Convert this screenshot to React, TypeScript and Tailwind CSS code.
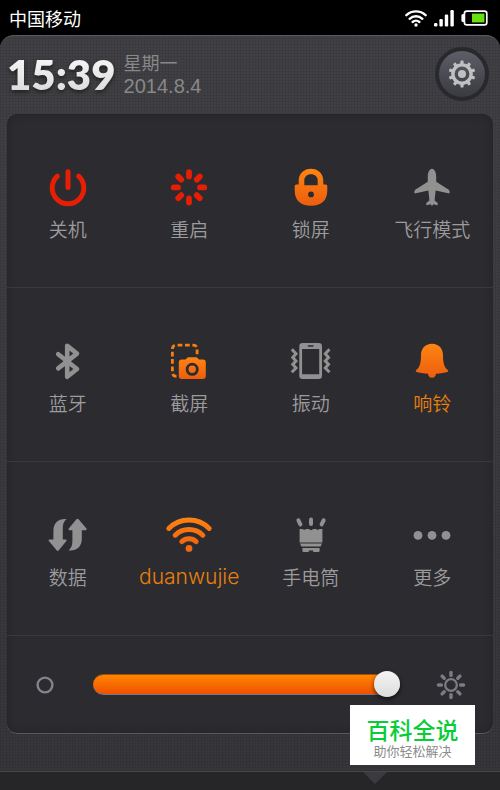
import { useState } from 'react';
import type { ReactNode } from 'react';

type Tone = 'off' | 'danger' | 'on';

interface Toggle {
  id: string;
  label: string;
  icon: ReactNode;
  tone: Tone;
  highlight?: boolean;
}

const toneClass: Record<Tone, string> = {
  off: 'text-[#919191]',
  danger: 'text-[#e61e04]',
  on: 'text-[#f77410]',
};

const Icon = ({ children }: { children: ReactNode }) => (
  <svg viewBox="0 0 48 48" className="h-12 w-12" fill="currentColor" aria-hidden="true">
    {children}
  </svg>
);

const PowerIcon = () => (
  <Icon>
    <g fill="none" stroke="currentColor" strokeWidth="5" strokeLinecap="round">
      <path d="M13.4 13.2A15.8 15.8 0 1 0 34.6 13.2" />
      <path d="M24 8.8V24.6" />
    </g>
  </Icon>
);

const RestartIcon = () => (
  <Icon>
    <g stroke="currentColor" strokeWidth="5.8" strokeLinecap="round">
      {[0, 45, 90, 135, 180, 225, 270, 315].map((angle) => (
        <path key={angle} d="M24 9.2V13.4" transform={`rotate(${angle} 24 24.4)`} />
      ))}
    </g>
  </Icon>
);

const LockIcon = () => (
  <Icon>
    <path
      fill="url(#orange)"
      fillRule="evenodd"
      d="M11.7 21.4V17.5C11.7 10.5 17 5.7 24 5.7S36.3 10.5 36.3 17.5V21.4H38.6Q40.3 21.4 40.3 23.2V27.5C40.3 37.5 34.5 42.7 24 42.7S7.7 37.5 7.7 27.5V23.2Q7.7 21.4 9.4 21.4ZM17.3 22.3H30.7V17.8C30.7 13.8 28 11.3 24 11.3S17.3 13.8 17.3 17.8ZM24 28.5A2.9 2.9 0 1 0 24 34.3A2.9 2.9 0 1 0 24 28.5Z"
    />
  </Icon>
);

const PlaneIcon = () => (
  <Icon>
    <path d="M24 5.7C26.6 5.7 28.2 9.6 28.2 13.2V18.8L40.4 26.6C41.6 27.5 42 29.2 41.4 30.6L27.6 27.6 26.6 37.6 29.2 39.6C29.9 40.3 29.9 41.6 29.5 42.2L25.4 41.2 24 42.9 22.6 41.2 18.5 42.2C18.1 41.6 18.1 40.3 18.8 39.6L21.4 37.6 20.4 27.6 6.6 30.6C6 29.2 6.4 27.5 7.6 26.6L19.8 18.8V13.2C19.8 9.6 21.4 5.7 24 5.7Z" />
  </Icon>
);

const BluetoothIcon = () => (
  <Icon>
    <path
      d="M14.2 17.2L33 32 23.2 39.8V8.8L33 16.6 14.2 31.4"
      fill="none"
      stroke="currentColor"
      strokeWidth="4.6"
      strokeLinecap="round"
      strokeLinejoin="round"
    />
  </Icon>
);

const ScreenshotIcon = () => (
  <Icon>
    <path
      d="M11.5 39.3C8.8 39.3 7.4 37.9 7.4 35.2V12.2C7.4 9.5 8.8 8.1 11.5 8.1H28C30.7 8.1 32.1 9.5 32.1 12.2V19.5"
      fill="none"
      stroke="#f77d10"
      strokeWidth="2.8"
      strokeDasharray="4.8 2.6"
    />
    <path
      fill="url(#orange)"
      fillRule="evenodd"
      d="M20.6 22.6 22 21C22.4 20.5 23 20.3 23.6 20.3H31C31.6 20.3 32.2 20.5 32.6 21L34 22.6H37.8Q40.8 22.6 40.8 25.6V39Q40.8 42 37.8 42H16.8Q13.8 42 13.8 39V25.6Q13.8 22.6 16.8 22.6ZM27.2 25.8A6.5 6.5 0 1 0 27.2 38.8A6.5 6.5 0 1 0 27.2 25.8ZM27.2 28.6A3.7 3.7 0 1 1 27.2 36A3.7 3.7 0 1 1 27.2 28.6Z"
    />
  </Icon>
);

const VibrateIcon = () => (
  <Icon>
    <path
      fillRule="evenodd"
      d="M15.6 6H31.7Q35 6 35 9.3V38.7Q35 42 31.7 42H15.6Q12.3 42 12.3 38.7V9.3Q12.3 6 15.6 6ZM15.1 12V37.2H32.2V12ZM21.4 8.2Q20.6 8.2 20.6 9T21.4 9.8H25.9Q26.7 9.8 26.7 9T25.9 8.2Z"
    />
    <g fill="none" stroke="currentColor" strokeWidth="3">
      <path d="M4.8 12.2 9 16.8 5.8 20.4 9 24 5.8 27.4 9 31 4.8 35.2" />
      <path d="M42.5 12.2 38.3 16.8 41.5 20.4 38.3 24 41.5 27.4 38.3 31 42.5 35.2" />
    </g>
  </Icon>
);

const BellIcon = () => (
  <Icon>
    <path
      fill="url(#orange)"
      d="M24 6.7C17 6.7 13 11.7 13 18 13 26 11.8 30.2 8.1 33.3 7.4 34.1 7.8 34.9 8.7 35.1 11.3 35.9 15.2 36.6 20 36.8 20.2 39.2 21.8 40.8 24 40.8S27.8 39.2 28 36.8C32.8 36.6 36.7 35.9 39.3 35.1 40.2 34.9 40.6 34.1 39.9 33.3 36.2 30.2 35 26 35 18 35 11.7 31 6.7 24 6.7Z"
    />
  </Icon>
);

const DataIcon = () => {
  const arrow =
    'M22.6 8.1C14.6 7.4 9.4 11.8 9.4 19.5V28.4H5.6C4.6 28.4 4.2 29.3 4.8 30.1L12.6 39.3C13.2 40.1 14.2 40.1 14.8 39.3L22.4 30.1C23 29.3 22.6 28.4 21.6 28.4H18.8V18.5C18.8 14 19.4 10.8 22.6 8.1Z';
  return (
    <Icon>
      <path d={arrow} />
      <path d={arrow} transform="rotate(180 23.6 23.8)" />
    </Icon>
  );
};

const WifiIcon = () => (
  <Icon>
    <g fill="none" stroke="url(#orangeTall)" strokeWidth="5" strokeLinecap="round">
      <path d="M3.8 17.4A28.4 28.4 0 0 1 44.2 17.4" />
      <path d="M10.2 24.2A19.8 19.8 0 0 1 37.8 24.2" />
      <path d="M16.8 30.6A10.6 10.6 0 0 1 31.2 30.6" />
    </g>
    <circle cx="24" cy="37.4" r="3.4" fill="#f26a10" />
  </Icon>
);

const TorchIcon = () => (
  <Icon>
    <g stroke="currentColor" strokeWidth="4" strokeLinecap="round">
      <path d="M24 8.4V13" />
      <path d="M11.4 9.4 13.4 13.4" />
      <path d="M36.6 9.4 34.6 13.4" />
    </g>
    <path d="M12.6 18H15.6L17.2 19 19 18H21.6L24 19.2 26.4 18H29L30.8 19 32.4 18H35.4V31.4H12.6ZM13 32.6H35L33.6 35.6H14.4ZM15.4 36.9H32.6V39.8Q32.6 41 31.4 41H26.2V39.4H21.8V41H16.6Q15.4 41 15.4 39.8Z" />
  </Icon>
);

const MoreIcon = () => (
  <Icon>
    <circle cx="10" cy="24.4" r="4.4" />
    <circle cx="24" cy="24.4" r="4.4" />
    <circle cx="38" cy="24.4" r="4.4" />
  </Icon>
);

const GearIcon = () => (
  <svg viewBox="0 0 28 28" className="h-7 w-7" fill="#c0c0c2" aria-hidden="true">
    <circle cx="14" cy="14" r="9.1" fill="none" stroke="#c0c0c2" strokeWidth="3.4" />
    <circle cx="14" cy="14" r="4" />
    {[0, 36, 72, 108, 144, 180, 216, 252, 288, 324].map((angle) => (
      <rect key={angle} x="12.4" y="0.6" width="3.2" height="4" rx="1" transform={`rotate(${angle} 14 14)`} />
    ))}
  </svg>
);

const toggles: Toggle[] = [
  { id: 'power', label: '关机', icon: <PowerIcon />, tone: 'danger' },
  { id: 'restart', label: '重启', icon: <RestartIcon />, tone: 'danger' },
  { id: 'lock', label: '锁屏', icon: <LockIcon />, tone: 'on' },
  { id: 'airplane', label: '飞行模式', icon: <PlaneIcon />, tone: 'off' },
  { id: 'bluetooth', label: '蓝牙', icon: <BluetoothIcon />, tone: 'off' },
  { id: 'screenshot', label: '截屏', icon: <ScreenshotIcon />, tone: 'on' },
  { id: 'vibrate', label: '振动', icon: <VibrateIcon />, tone: 'off' },
  { id: 'ring', label: '响铃', icon: <BellIcon />, tone: 'on', highlight: true },
  { id: 'data', label: '数据', icon: <DataIcon />, tone: 'off' },
  { id: 'wifi', label: 'duanwujie', icon: <WifiIcon />, tone: 'on', highlight: true },
  { id: 'torch', label: '手电筒', icon: <TorchIcon />, tone: 'off' },
  { id: 'more', label: '更多', icon: <MoreIcon />, tone: 'off' },
];

const StatusBar = () => (
  <div className="flex h-[35px] items-center justify-between bg-black pl-[9px] pr-3 text-white">
    <span className="text-[18px] leading-6">中国移动</span>
    <div className="flex items-center gap-[7px]">
      <svg viewBox="0 0 22 18" className="h-[18px] w-[22px]" fill="none" stroke="white" strokeWidth="2.4" strokeLinecap="round" aria-hidden="true">
        <path d="M1.4 6.2A14 14 0 0 1 20.6 6.2" />
        <path d="M4.6 9.8A9.5 9.5 0 0 1 17.4 9.8" />
        <path d="M7.6 13A5 5 0 0 1 14.4 13" />
        <circle cx="11" cy="16" r="1.7" fill="white" stroke="none" />
      </svg>
      <svg viewBox="0 0 20 18" className="h-[18px] w-5" fill="white" aria-hidden="true">
        <rect x="0" y="14" width="3.4" height="3.4" rx="1.2" />
        <rect x="5.4" y="10" width="3.4" height="7.4" rx="1.2" />
        <rect x="10.8" y="5.6" width="3.4" height="11.8" rx="1.2" />
        <rect x="16.4" y="1" width="3.4" height="16.4" rx="1.2" />
      </svg>
      <svg viewBox="0 0 27 16" className="h-4 w-[27px]" aria-hidden="true">
        <rect x="0.4" y="4" width="4" height="8" rx="1.6" fill="white" />
        <rect x="3.4" y="1.2" width="22.4" height="13.6" rx="2.4" fill="black" stroke="white" strokeWidth="1.7" />
        <rect x="11" y="3.6" width="12.4" height="8.8" fill="#66e010" />
      </svg>
    </div>
  </div>
);

const Header = () => (
  <header className="flex h-[78px] items-center justify-between pr-[11px] pb-[3px] pl-[7px]">
    <div className="flex items-center gap-2">
      <time className="bg-linear-to-b from-white to-[#d4d4d4] bg-clip-text font-['Lato',sans-serif] text-[42px] font-extrabold leading-[56px] text-transparent drop-shadow-[0_2px_2px_#0008]">
        15:39
      </time>
      <div className="text-[#88888a]">
        <div className="text-[18px] leading-6">星期一</div>
        <div className="font-['Liberation_Sans',sans-serif] text-[20px] leading-6">2014.8.4</div>
      </div>
    </div>
    <button
      type="button"
      aria-label="设置"
      className="flex h-[54px] w-[54px] items-center justify-center rounded-full border-4 border-[#29292d] bg-linear-to-b from-[#5d5e68] to-[#3a3b40]"
    >
      <GearIcon />
    </button>
  </header>
);

const ToggleButton = ({ toggle }: { toggle: Toggle }) => (
  <button
    type="button"
    className="flex h-[174px] flex-col items-center gap-1.5 border-b border-[#39393d] pt-[49px]"
  >
    <span className={toneClass[toggle.tone]}>{toggle.icon}</span>
    <span
      className={`leading-6 whitespace-nowrap ${
        toggle.id === 'wifi' ? "font-['Inter',sans-serif] text-[21px] font-light" : 'text-[19px] font-[350]'
      } ${toggle.highlight ? 'text-[#e8800c]' : 'text-[#9c9c9e]'}`}
    >
      {toggle.label}
    </span>
  </button>
);

const Brightness = () => {
  const [value, setValue] = useState(100);

  return (
    <div className="flex h-[97px] items-center pl-[29px] pr-[27px]">
      <svg viewBox="0 0 18 18" className="h-[18px] w-[18px] shrink-0" aria-hidden="true">
        <circle cx="9" cy="9" r="7.4" fill="none" stroke="#84848c" strokeWidth="2.4" />
      </svg>
      <input
        type="range"
        min="0"
        max="100"
        aria-label="亮度"
        value={value}
        onChange={(e) => setValue(Number(e.target.value))}
        className="mr-9 ml-[39px] h-[26px] min-w-0 flex-1 appearance-none bg-transparent [&::-webkit-slider-runnable-track]:h-[21px] [&::-webkit-slider-runnable-track]:rounded-full [&::-webkit-slider-runnable-track]:border-t [&::-webkit-slider-runnable-track]:border-b [&::-webkit-slider-runnable-track]:border-t-[#9c5008] [&::-webkit-slider-runnable-track]:border-b-[#77777c] [&::-webkit-slider-runnable-track]:bg-linear-to-b [&::-webkit-slider-runnable-track]:from-[#ff8400] [&::-webkit-slider-runnable-track]:to-[#ee5000] [&::-webkit-slider-thumb]:-mt-[4px] [&::-webkit-slider-thumb]:h-[26px] [&::-webkit-slider-thumb]:w-[26px] [&::-webkit-slider-thumb]:appearance-none [&::-webkit-slider-thumb]:rounded-full [&::-webkit-slider-thumb]:bg-linear-to-b [&::-webkit-slider-thumb]:from-[#f4f4f4] [&::-webkit-slider-thumb]:to-[#dcdcdc] [&::-webkit-slider-thumb]:shadow-[0_2px_4px_#000a]"
      />
      <svg viewBox="0 0 30 30" className="h-[30px] w-[30px] shrink-0" fill="none" stroke="#7c7c84" strokeLinecap="round" aria-hidden="true">
        <circle cx="15" cy="15" r="5.8" strokeWidth="2.2" />
        {[0, 45, 90, 135, 180, 225, 270, 315].map((angle) => (
          <path key={angle} d="M15 2.4V5.4" strokeWidth="3.4" transform={`rotate(${angle} 15 15)`} />
        ))}
      </svg>
    </div>
  );
};

const App = () => (
  <div className="relative flex min-h-screen flex-col bg-black font-['Noto_Sans_CJK_SC',sans-serif]">
    <svg className="absolute h-0 w-0" aria-hidden="true">
      <defs>
        <linearGradient id="orange" x1="0" y1="0" x2="0" y2="1">
          <stop offset="0" stopColor="#ff8412" />
          <stop offset="1" stopColor="#ec5e0e" />
        </linearGradient>
        <linearGradient id="orangeTall" gradientUnits="userSpaceOnUse" x1="0" y1="6" x2="0" y2="40">
          <stop offset="0" stopColor="#ff8412" />
          <stop offset="1" stopColor="#ec5e0e" />
        </linearGradient>
      </defs>
    </svg>

    <StatusBar />

    <main className="rounded-t-[14px] border-t border-b border-t-[#5a5a5e] border-b-[#47474b] bg-[#38383c] bg-[repeating-linear-gradient(0deg,#00000012_0_1px,transparent_1px_3px),repeating-linear-gradient(90deg,#00000012_0_1px,transparent_1px_3px),linear-gradient(#414145,#37373b)] px-[7px] pb-[37px]">
      <div className="-mx-[7px]">
        <Header />
      </div>
      <section className="rounded-[10px] border-b border-[#5a5a5d] bg-[#2c2b30] shadow-[inset_0_0_10px_#00000038]">
        <div className="grid grid-cols-4">
          {toggles.map((toggle) => (
            <ToggleButton key={toggle.id} toggle={toggle} />
          ))}
        </div>
        <Brightness />
      </section>
    </main>

    <footer className="flex flex-1 justify-center bg-[#262628]">
      <svg viewBox="0 0 24 12" className="ml-[50%] h-3 w-6" fill="#3b3b3f" aria-hidden="true">
        <path d="M0 0H24L12 12Z" />
      </svg>
    </footer>

    <aside className="absolute right-[25px] bottom-[25px] flex h-[60px] w-[125px] flex-col items-center justify-center bg-white pt-1">
      <strong className="text-[23px] font-medium leading-7 text-[#08cc38]">百科全说</strong>
      <span className="text-[13px] leading-4 text-[#8c8c8c]">助你轻松解决</span>
    </aside>
  </div>
);

export default App;
